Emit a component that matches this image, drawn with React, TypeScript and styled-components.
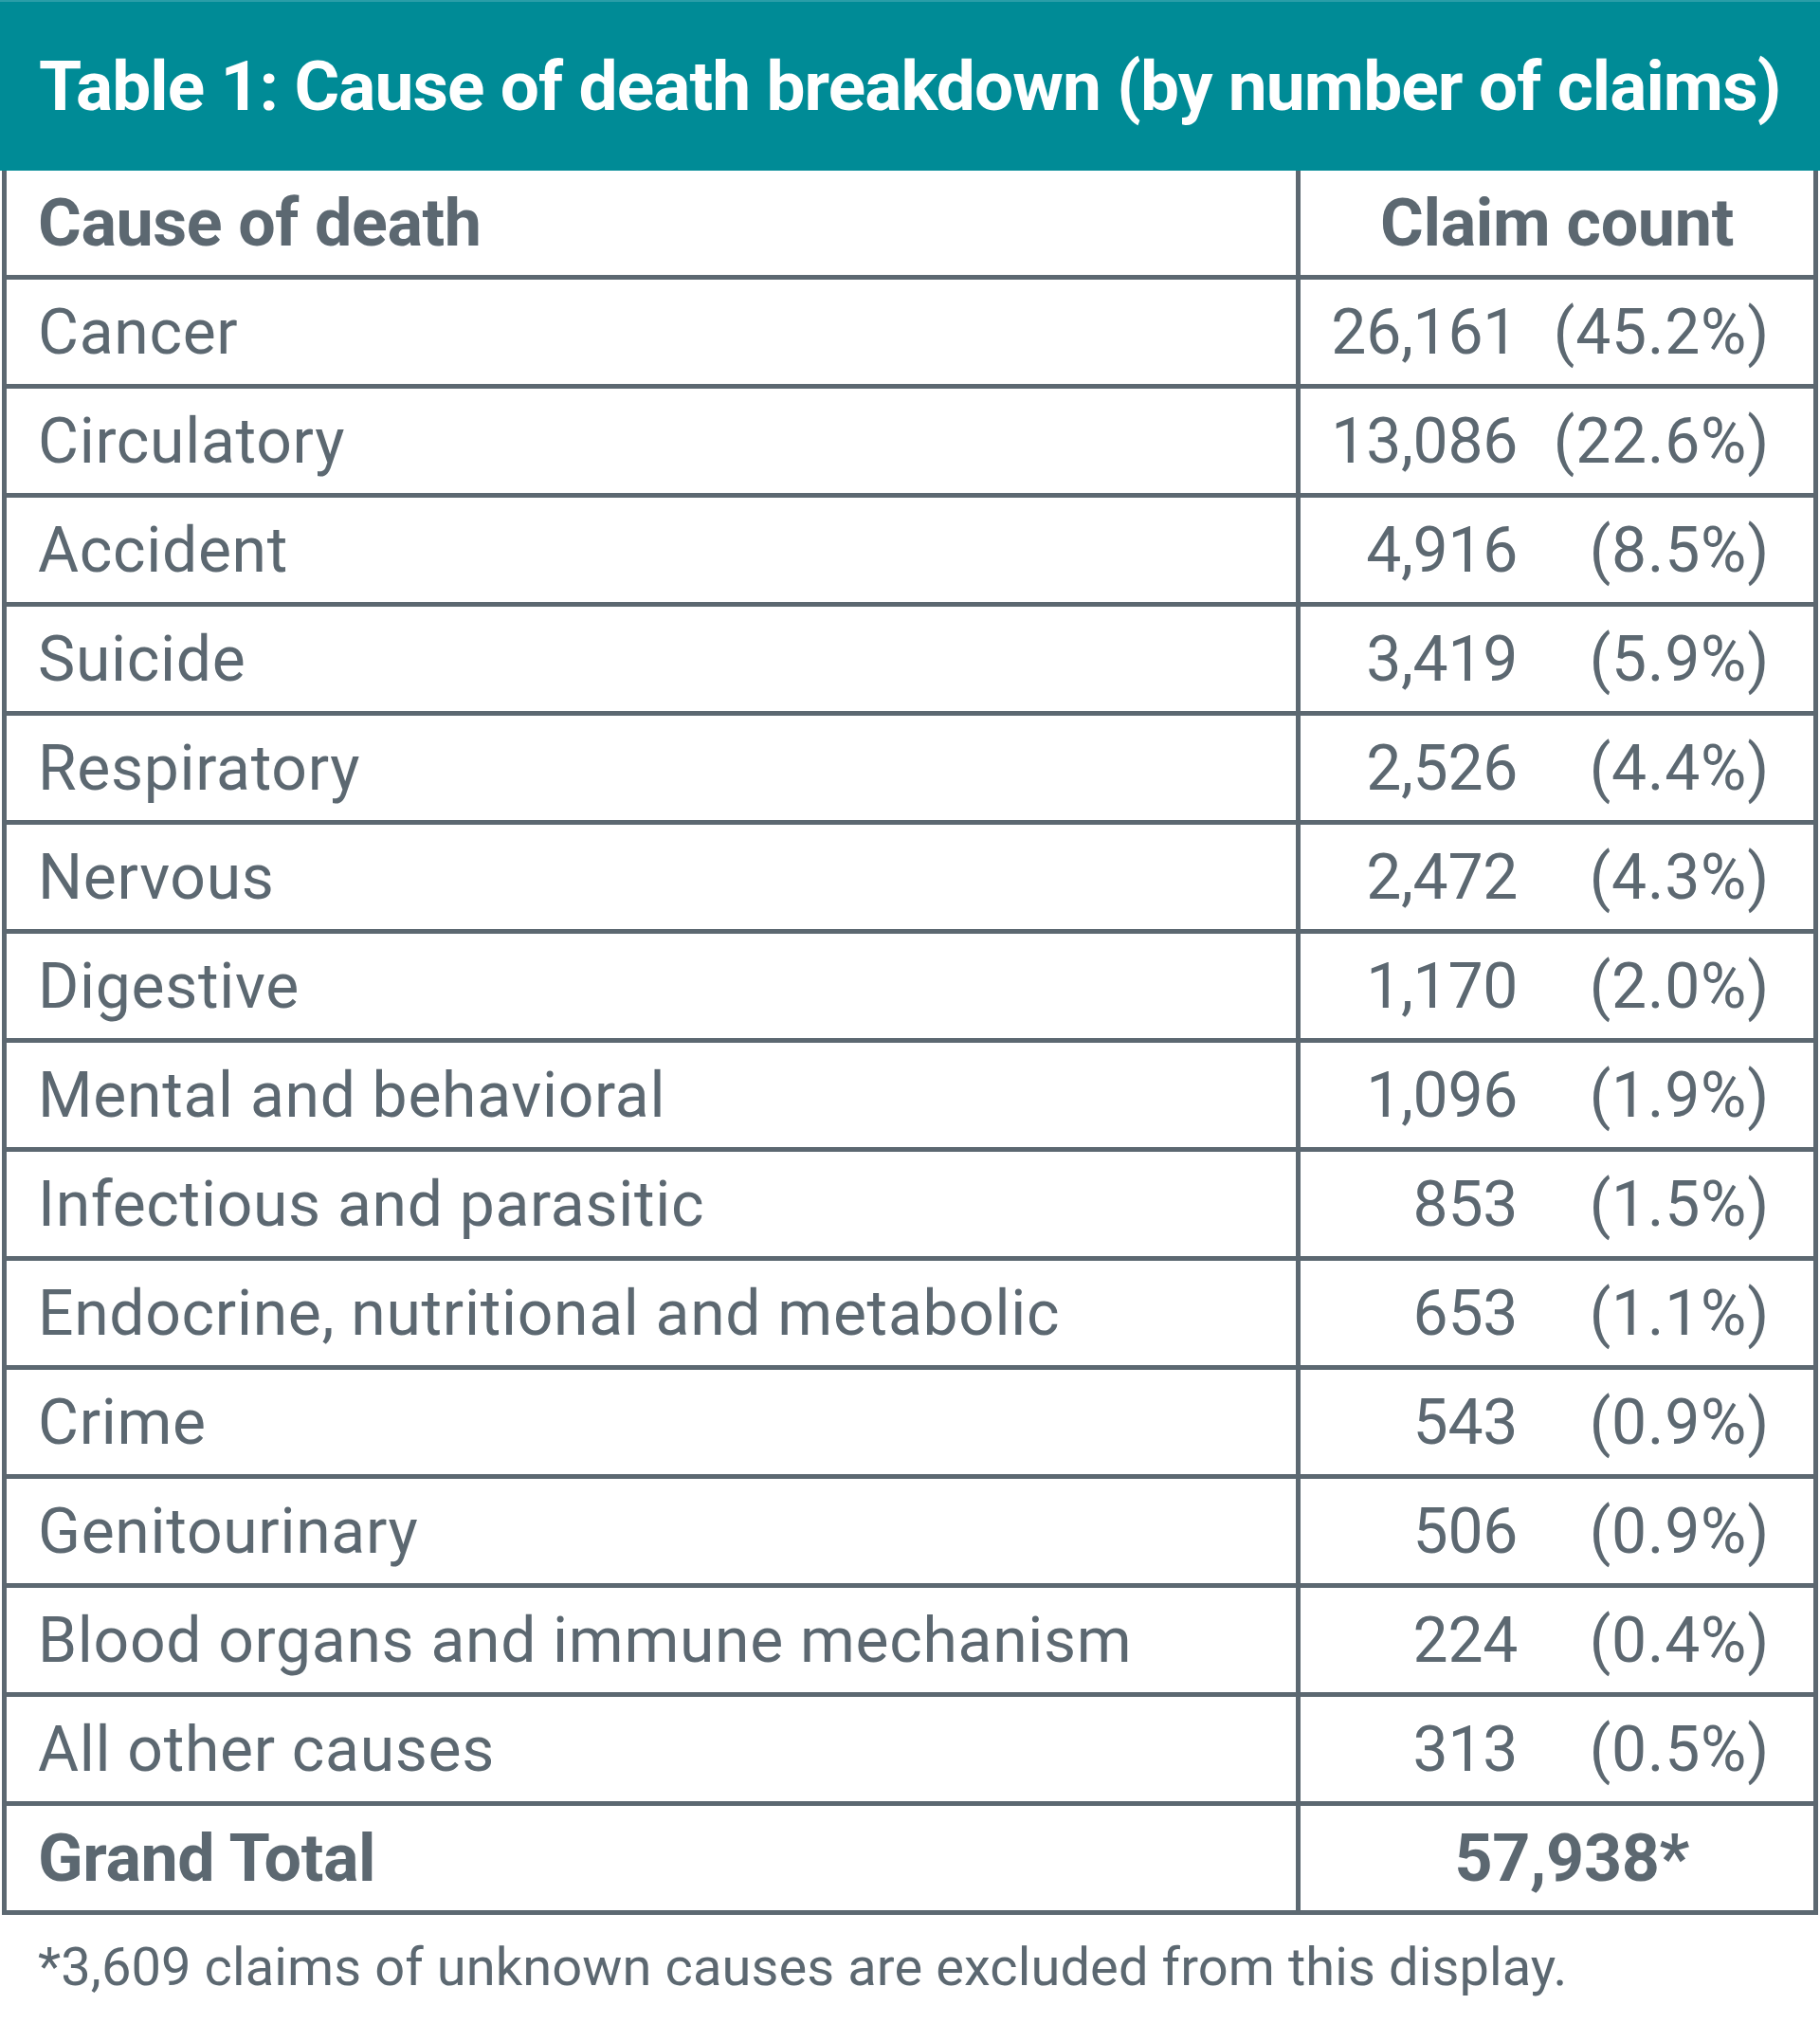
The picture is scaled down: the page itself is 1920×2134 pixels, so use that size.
import React from 'react';
import styled, { createGlobalStyle } from 'styled-components';

const GlobalStyle = createGlobalStyle`
  html, body {
    margin: 0;
    padding: 0;
    background: #ffffff;
  }
  body {
    font-family: Roboto, "Liberation Sans", Arial, sans-serif;
  }
`;

const teal = '#008b96';
const slate = '#5c6871';
const line = '5px';

const Page = styled.div`
  width: 1920px;
  min-height: 2134px;
  background: #ffffff;
  color: ${slate};
`;

const TitleBar = styled.div`
  height: 180px;
  display: flex;
  align-items: center;
  padding-left: 41px;
  box-sizing: border-box;
  background: ${teal};
  border-top: 2px solid #2a9ea8;
  color: #ffffff;
  font-size: 73px;
  font-weight: 700;
  letter-spacing: -0.9px;
  white-space: nowrap;
`;

const Table = styled.div`
  margin: 0 2px;
  border-left: ${line} solid ${slate};
  border-right: ${line} solid ${slate};
`;

const Row = styled.div`
  display: grid;
  grid-template-columns: 1365px 1fr;
  height: 115px;
  box-sizing: border-box;
  border-bottom: ${line} solid ${slate};
`;

const NameCell = styled.div<{ $bold?: boolean }>`
  display: flex;
  align-items: center;
  padding-left: 33px;
  border-right: ${line} solid ${slate};
  font-size: ${p => (p.$bold ? '70px' : '66px')};
  font-weight: ${p => (p.$bold ? 700 : 400)};
  letter-spacing: ${p => (p.$bold ? '-0.4px' : '0.7px')};
  white-space: nowrap;
`;

const CountCell = styled.div`
  display: grid;
  grid-template-columns: 1fr 266px;
  align-items: center;
  padding-right: 46px;
  font-size: 66px;
  font-weight: 400;
  white-space: nowrap;
`;

const Num = styled.span`
  text-align: right;
  letter-spacing: -0.3px;
`;

const Pct = styled.span`
  text-align: right;
  letter-spacing: 0.8px;
`;

const CenterCell = styled.div`
  display: flex;
  align-items: center;
  justify-content: center;
  font-size: 70px;
  font-weight: 700;
  letter-spacing: -0.3px;
  white-space: nowrap;
`;

const Mark = styled.span`
  display: inline-block;
  width: 0;
  overflow: visible;
`;

const Footnote = styled.p`
  margin: 0;
  padding: 22px 0 0 40px;
  font-size: 56px;
  font-weight: 400;
  letter-spacing: 0.1px;
  white-space: nowrap;
`;

const rows: [string, string, string][] = [
  ['Cancer', '26,161', '(45.2%)'],
  ['Circulatory', '13,086', '(22.6%)'],
  ['Accident', '4,916', '(8.5%)'],
  ['Suicide', '3,419', '(5.9%)'],
  ['Respiratory', '2,526', '(4.4%)'],
  ['Nervous', '2,472', '(4.3%)'],
  ['Digestive', '1,170', '(2.0%)'],
  ['Mental and behavioral', '1,096', '(1.9%)'],
  ['Infectious and parasitic', '853', '(1.5%)'],
  ['Endocrine, nutritional and metabolic', '653', '(1.1%)'],
  ['Crime', '543', '(0.9%)'],
  ['Genitourinary', '506', '(0.9%)'],
  ['Blood organs and immune mechanism', '224', '(0.4%)'],
  ['All other causes', '313', '(0.5%)'],
];

const App: React.FC = () => {
  return (
    <Page>
      <GlobalStyle />
      <TitleBar>Table 1: Cause of death breakdown (by number of claims)</TitleBar>
      <Table>
        <Row>
          <NameCell $bold>Cause of death</NameCell>
          <CenterCell>Claim count</CenterCell>
        </Row>
        {rows.map(([name, count, pct]) => (
          <Row key={name}>
            <NameCell>{name}</NameCell>
            <CountCell>
              <Num>{count}</Num>
              <Pct>{pct}</Pct>
            </CountCell>
          </Row>
        ))}
        <Row>
          <NameCell $bold>Grand Total</NameCell>
          <CenterCell>
            57,938<Mark>*</Mark>
          </CenterCell>
        </Row>
      </Table>
      <Footnote>*3,609 claims of unknown causes are excluded from this display.</Footnote>
    </Page>
  );
};

export default App;
